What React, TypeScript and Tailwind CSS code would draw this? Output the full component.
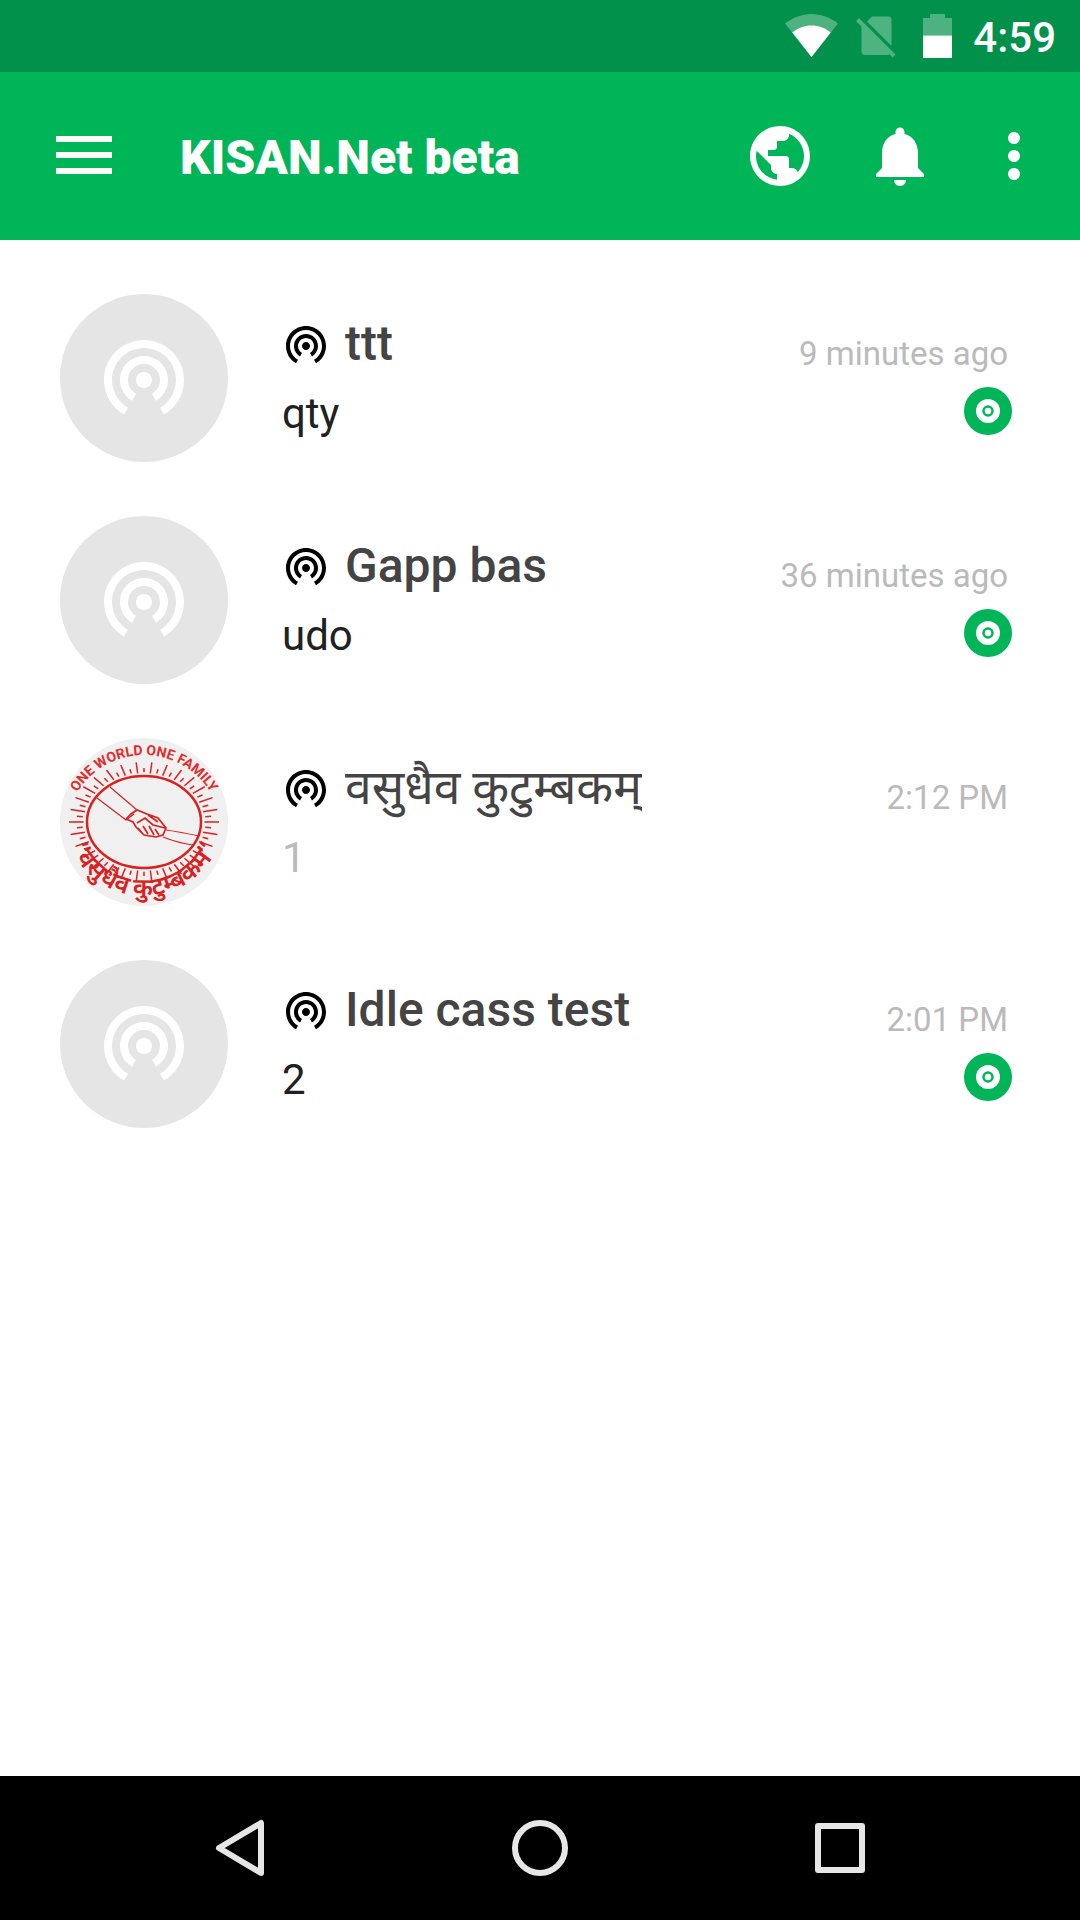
const PUBLIC = "M12 2C6.48 2 2 6.48 2 12s4.48 10 10 10 10-4.48 10-10S17.52 2 12 2zm-1 17.93c-3.95-.49-7-3.85-7-7.93 0-.62.08-1.21.21-1.79L9 15v1c0 1.1.9 2 2 2v1.93zm6.9-2.54c-.26-.81-1-1.39-1.9-1.39h-1v-3c0-.55-.45-1-1-1H8v-2h2c.55 0 1-.45 1-1V7h2c1.1 0 2-.9 2-2v-.41c2.93 1.19 5 4.06 5 7.41 0 2.08-.8 3.97-2.1 5.39z";
const BELL = "M12 22c1.1 0 2-.9 2-2h-4c0 1.1.89 2 2 2zm6-6v-5c0-3.07-1.64-5.64-4.5-6.32V4c0-.83-.67-1.5-1.5-1.5s-1.5.67-1.5 1.5v.68C7.63 5.36 6 7.92 6 11v5l-2 2v1h16v-1l-2-2z";
const MORE = "M12 8c1.1 0 2-.9 2-2s-.9-2-2-2-2 .9-2 2 .9 2 2 2zm0 2c-1.1 0-2 .9-2 2s.9 2 2 2 2-.9 2-2-.9-2-2-2zm0 6c-1.1 0-2 .9-2 2s.9 2 2 2 2-.9 2-2-.9-2-2-2z";
const TETHER = "M12 11c-1.1 0-2 .9-2 2s.9 2 2 2 2-.9 2-2-.9-2-2-2zm6 2c0-3.31-2.69-6-6-6s-6 2.69-6 6c0 2.22 1.21 4.15 3 5.19l1-1.74c-1.19-.7-2-1.97-2-3.45 0-2.21 1.79-4 4-4s4 1.79 4 4c0 1.48-.81 2.75-2 3.45l1 1.74c1.79-1.04 3-2.97 3-5.19zM12 3C6.48 3 2 7.48 2 13c0 3.7 2.01 6.92 4.99 8.65l1-1.73C5.61 18.53 4 15.96 4 13c0-4.42 3.58-8 8-8s8 3.58 8 8c0 2.96-1.61 5.53-4 6.92l1 1.73c2.99-1.73 5-4.95 5-8.65 0-5.52-4.48-10-10-10z";

function Icon({ d, className }: { d: string; className: string }) {
  return (
    <svg viewBox="0 0 24 24" fill="currentColor" className={className} aria-hidden="true">
      <path d={d} />
    </svg>
  );
}

function StatusBar() {
  return (
    <div className="flex h-[72px] items-center justify-end bg-[#02914a] pr-6 text-white">
      <svg className="h-11 w-[54px]" viewBox="0 0 54 44" aria-label="Wi-Fi">
        <path d="M0 9.5C8 3.500 17 0 26.500 0S45 3.500 53 9.500L26.500 43z" fill="#fff" opacity=".3" />
        <path d="M7.300 18.500C13 14 19.500 11.500 26.500 11.500S40 14 45.700 18.500L26.500 43z" fill="#fff" />
      </svg>
      <svg className="ml-[17px] h-11 w-10" viewBox="0 0 40 44" fill="#fff" opacity=".3" aria-label="No SIM">
        <path d="M11 7.500L16 2.500H32.500C34.500 2.500 35.500 4 35.500 5.500V32z" />
        <path d="M0 7l3-3 36.500 36.500-3 3-3-3.200C33 40.700 32.500 41 32 41H9c-2 0-3.500-1.500-3.500-3.500V12.500z" />
      </svg>
      <svg className="ml-[27px] h-11 w-[29px]" viewBox="0 0 29 44" fill="#fff" aria-label="Battery">
        <path d="M7 0h15v4h7v17.500H0V4h7z" opacity=".3" />
        <path d="M0 21.500h29V44H0z" />
      </svg>
      <span className="ml-[21px] pt-[3px] text-[42px] leading-[48px] font-medium">4:59</span>
    </div>
  );
}

function AppBar() {
  return (
    <header className="flex h-[168px] items-center bg-[#00b558] pr-[30px] pl-14 text-white">
      <button aria-label="Menu" className="flex flex-col gap-2.5 pb-0.5">
        <span className="h-1.5 w-14 bg-white" />
        <span className="h-1.5 w-14 bg-white" />
        <span className="h-1.5 w-14 bg-white" />
      </button>
      <h1 className="ml-17 flex-1 pt-[3px] text-5xl font-black">KISAN.Net beta</h1>
      <button aria-label="Language"><Icon d={PUBLIC} className="size-18" /></button>
      <button aria-label="Notifications" className="ml-12"><Icon d={BELL} className="size-18" /></button>
      <button aria-label="More options" className="ml-[42px]"><Icon d={MORE} className="size-18" /></button>
    </header>
  );
}

const RAYS = Array.from({ length: 60 }, (_, i) => {
  const a = (i * Math.PI) / 30;
  const inner = i % 2 ? 1.08 : 1.06;
  const outer = i % 2 ? 0.9 : 1;
  return {
    x1: 84 + 57 * inner * Math.cos(a), y1: 84 + 46 * inner * Math.sin(a),
    x2: 84 + 75 * outer * Math.cos(a), y2: 84 + 60 * outer * Math.sin(a),
  };
});

function FamilyLogo() {
  return (
    <svg viewBox="0 0 168 168" className="size-[168px] shrink-0 rounded-full bg-[#f0f0f0]" aria-label="One World One Family">
      <defs>
        <path id="arc-top" d="M6 95A78 78 0 0 1 162 95" />
        <path id="arc-bottom" d="M4 78A80 80 0 0 0 164 78" />
      </defs>
      <g fill="none" stroke="#d9211f">
        {RAYS.map((r, i) => <line key={i} {...r} strokeWidth="1.500" />)}
        <ellipse cx="84" cy="84" rx="57" ry="46" strokeWidth="2.500" />
        <path d="M50 49L77 72M37 60L66 82L74 76M106 92Q120 94 139 98M103 99Q118 105 133 107" strokeWidth="1.200" />
        <path d="M66 81L71 76L77 72L87 76L98 80L106 90L103 97L96 99L84 97L76 89L73 84L66 81M77 85L85 80L93 87L105 90M78 90L83 96M83 88L88 96M89 88L94 97M95 91L99 97M88 77L98 84" strokeWidth="1.700" />
      </g>
      <text fill="#e22b2b" className="text-[14px] font-bold"><textPath href="#arc-top" startOffset="50%" textAnchor="middle">ONE WORLD ONE FAMILY</textPath></text>
      <text fill="#d9211f" className="font-['Noto_Sans'] text-[25px] font-semibold"><textPath href="#arc-bottom" startOffset="50%" textAnchor="middle">“वसुधैव कुटुम्बकम”</textPath></text>
    </svg>
  );
}

type Channel = { name: string; message: string; time: string; unread: boolean; logo?: boolean };

const CHANNELS: Channel[] = [
  { name: "ttt", message: "qty", time: "9 minutes ago", unread: true },
  { name: "Gapp bas", message: "udo", time: "36 minutes ago", unread: true },
  { name: "वसुधैव कुटुम्बकम्", message: "1", time: "2:12 PM", unread: false, logo: true },
  { name: "Idle cass test", message: "2", time: "2:01 PM", unread: true },
];

function ChannelRow({ name, message, time, unread, logo }: Channel) {
  return (
    <li className="flex h-[222px] items-center pr-[68px] pl-[60px]">
      {logo ? <FamilyLogo /> : (
        <div className="flex size-[168px] shrink-0 items-center justify-center rounded-full bg-[#e5e5e5] pb-1 text-white">
          <Icon d={TETHER} className="size-24" />
        </div>
      )}
      <div className="ml-[54px] min-w-0 flex-1 pt-0.5">
        <div className="flex h-[60px] items-center">
          <Icon d={TETHER} className="size-12 shrink-0 text-black" />
          <h2 className={logo ? "ml-[15px] truncate text-5xl leading-[72px] font-normal text-[#444]" : "ml-[15px] truncate text-5xl leading-[72px] font-medium text-[#444]"}>{name}</h2>
        </div>
        <p className={logo ? "mt-2.5 text-[42px] leading-[60px] text-[#bababa]" : "mt-2.5 text-[42px] leading-[60px] text-[#212121]"}>{message}</p>
      </div>
      <div className="flex h-[168px] flex-col items-end pt-10">
        <time className="mr-1 text-[33px] leading-10 text-[#bababa]">{time}</time>
        {unread && (
          <svg viewBox="0 0 48 48" className="mt-[13px] size-12" aria-label="Unread">
            <circle cx="24" cy="24" r="24" fill="#00b558" />
            <circle cx="24" cy="24" r="12" fill="#fff" />
            <circle cx="24" cy="24" r="4.500" fill="none" stroke="#00b558" strokeWidth="2.500" />
          </svg>
        )}
      </div>
    </li>
  );
}

function NavBar() {
  return (
    <nav className="flex h-36 items-center justify-center gap-[228px] bg-black text-[#e6e6e6]">
      <button aria-label="Back">
        <svg viewBox="0 0 72 72" className="size-18" fill="none" stroke="currentColor" strokeWidth="6" strokeLinejoin="round"><path d="M57 11V61L15 36z" /></svg>
      </button>
      <button aria-label="Home">
        <svg viewBox="0 0 72 72" className="size-18" fill="none" stroke="currentColor" strokeWidth="6"><circle cx="36" cy="36" r="25" /></svg>
      </button>
      <button aria-label="Recent apps">
        <svg viewBox="0 0 72 72" className="size-18" fill="none" stroke="currentColor" strokeWidth="6" strokeLinejoin="round"><rect x="14" y="14" width="44" height="44" /></svg>
      </button>
    </nav>
  );
}

export default function App() {
  return (
    <div className="flex min-h-screen flex-col bg-white font-['Roboto','Noto_Sans',sans-serif]">
      <StatusBar />
      <AppBar />
      <main className="flex-1">
        <ul className="pt-[27px]">
          {CHANNELS.map((c) => <ChannelRow key={c.name} {...c} />)}
        </ul>
      </main>
      <NavBar />
    </div>
  );
}
